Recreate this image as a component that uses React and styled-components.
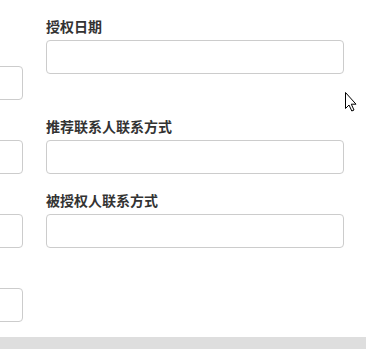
import React from "react";
import styled, { createGlobalStyle } from "styled-components";

const Global = createGlobalStyle`
  html, body { margin: 0; padding: 0; background: #dedede; }
  body { font-family: "Noto Sans CJK SC", "Noto Sans", sans-serif; }
  * { box-sizing: border-box; }
`;

const Screen = styled.div`
  position: relative;
  width: 366px;
  height: 349px;
  display: flex;
  flex-direction: column;
  overflow: hidden;
`;

const Sheet = styled.div`
  height: 337px;
  background: #fff;
  overflow: hidden;
`;

const Footer = styled.div`
  flex: 1;
  background: #dedede;
`;

const Columns = styled.div`
  display: grid;
  grid-template-columns: 298px 298px;
  column-gap: 23px;
  margin-left: -275px;
`;

const Column = styled.div`
  display: flex;
  flex-direction: column;
  padding-top: ${(p) => p.$top}px;
`;

const Field = styled.div`
  display: flex;
  flex-direction: column;
  gap: 4px;
  margin-bottom: ${(p) => (p.$spaced ? 42 : 16)}px;
`;

const Label = styled.label`
  height: 20px;
  line-height: 20px;
  font-size: 14px;
  font-weight: 700;
  color: #333;
  white-space: nowrap;
`;

const Input = styled.input`
  display: block;
  width: 100%;
  height: 34px;
  border: 1px solid #ccc;
  border-radius: 4px;
  background: #fff;
  outline: none;
  padding: 6px 12px;
  font-size: 14px;
`;

const Cursor = styled.svg`
  position: absolute;
  left: 344px;
  top: 92px;
`;

export default function App() {
  return (
    <>
      <Global />
      <Screen>
        <Sheet>
          <Columns>
            <Column $top={42}>
              {[0, 1, 2, 3].map((i) => (
                <Field key={i}>
                  <Label aria-hidden="true"> </Label>
                  <Input />
                </Field>
              ))}
            </Column>
            <Column $top={16}>
              <Field $spaced>
                <Label>授权日期</Label>
                <Input />
              </Field>
              <Field>
                <Label>推荐联系人联系方式</Label>
                <Input />
              </Field>
              <Field>
                <Label>被授权人联系方式</Label>
                <Input />
              </Field>
            </Column>
          </Columns>
        </Sheet>
        <Footer />
        <Cursor width="13" height="20" viewBox="0 0 13 20">
          <path
            d="M1.5 0.5 L1.5 16.5 L5 13 L7.8 19 L10 18 L7.3 12.2 L12 12.2 Z"
            fill="#fff"
            stroke="#000"
            strokeWidth="1"
            strokeLinejoin="miter"
          />
        </Cursor>
      </Screen>
    </>
  );
}
